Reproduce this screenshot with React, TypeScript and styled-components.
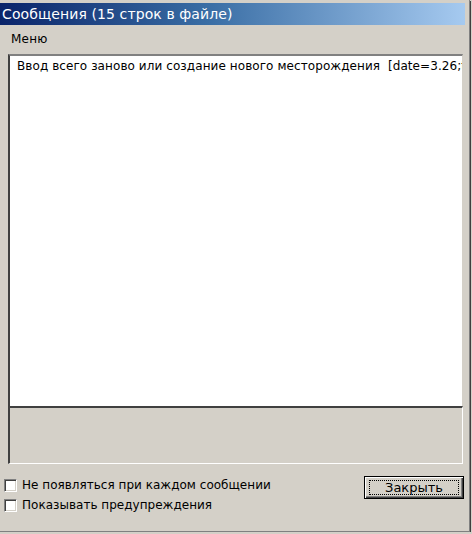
import * as React from 'react'
import styled, { createGlobalStyle } from 'styled-components'

const FONT = `'DejaVu Sans', Tahoma, Verdana, sans-serif`

const GlobalStyle = createGlobalStyle`
  html, body {
    margin: 0;
    padding: 0;
    background: #d4d0c8;
  }
  body {
    font-family: ${FONT};
  }
`

const Window = styled.div`
  box-sizing: border-box;
  width: 470px;
  height: 532px;
  padding-top: 3px;
  display: flex;
  flex-direction: column;
  background: #d4d0c8;
  border-right: 1px solid #808080;
  border-bottom: 1px solid #808080;
  box-shadow: 1px 1px 0 #404040;
`

const TitleBar = styled.div`
  height: 22px;
  margin-right: 4px;
  display: flex;
  align-items: center;
  padding-left: 2px;
  background: linear-gradient(to right, #0a246a 0%, #3a6ea5 45%, #a6caf0 100%);
  color: #ffffff;
  font-family: ${FONT};
  font-size: 14px;
  letter-spacing: 0.1px;
`

const MenuBar = styled.div`
  height: 24px;
  display: flex;
  align-items: center;
  padding: 3px 0 0 11px;
  box-sizing: border-box;
  font-family: ${FONT};
  font-size: 12px;
  letter-spacing: 0.2px;
  color: #000;
`

const Panes = styled.div`
  margin: 5px 6px 0 8px;
  display: flex;
  flex-direction: column;
`

const MessageBox = styled.div`
  box-sizing: border-box;
  height: 352px;
  background: #fff;
  border-top: 2px solid #808080;
  border-left: 2px solid #404040;
  border-right: 1px solid #d4d0c8;
  padding: 3px 0 0 7px;
  overflow: hidden;
  white-space: nowrap;
  font-family: ${FONT};
  font-size: 12px;
  letter-spacing: 0.08px;
  color: #000;
`

const StatusPane = styled.div`
  box-sizing: border-box;
  height: 58px;
  border-top: 2px solid #404040;
  border-left: 2px solid #404040;
  border-right: 1px solid #fff;
  border-bottom: 1px solid #fff;
  background: #d4d0c8;
`

const Footer = styled.div`
  display: flex;
  justify-content: space-between;
  align-items: flex-start;
  padding: 12px 5px 0 4px;
`

const Options = styled.div`
  display: flex;
  flex-direction: column;
  gap: 8px;
  padding-top: 3px;
`

const Option = styled.label`
  display: flex;
  align-items: center;
  gap: 5px;
  font-family: ${FONT};
  font-size: 12px;
  letter-spacing: 0.02px;
  color: #000;
  height: 12px;
`

const Box = styled.span`
  box-sizing: border-box;
  width: 13px;
  height: 13px;
  background: #fff;
  border-top: 1px solid #808080;
  border-left: 1px solid #808080;
  border-right: 1px solid #fff;
  border-bottom: 1px solid #fff;
  box-shadow: inset 1px 1px 0 #404040, inset -1px -1px 0 #d4d0c8;
`

const Button = styled.button`
  box-sizing: border-box;
  width: 100px;
  height: 23px;
  padding: 0;
  background: #d4d0c8;
  border: 1px solid #000;
  box-shadow: inset 1px 1px 0 #fff, inset -1px -1px 0 #404040, inset -2px -2px 0 #808080;
  font-family: ${FONT};
  font-size: 13px;
  color: #000;
  display: flex;
  align-items: center;
  justify-content: center;
`

const Focus = styled.span`
  box-sizing: border-box;
  width: 90px;
  height: 15px;
  border: 1px dotted #000;
  display: flex;
  align-items: center;
  justify-content: center;
  line-height: 13px;
`

export default function App() {
  return (
    <>
      <GlobalStyle />
      <Window>
        <TitleBar>Сообщения (15 строк в файле)</TitleBar>
        <MenuBar>Меню</MenuBar>
        <Panes>
          <MessageBox>Ввод всего заново или создание нового месторождения&nbsp;&nbsp;[date=3.26;time=10:15]</MessageBox>
          <StatusPane />
        </Panes>
        <Footer>
          <Options>
            <Option><Box />Не появляться при каждом сообщении</Option>
            <Option><Box />Показывать предупреждения</Option>
          </Options>
          <Button><Focus>Закрыть</Focus></Button>
        </Footer>
      </Window>
    </>
  )
}
